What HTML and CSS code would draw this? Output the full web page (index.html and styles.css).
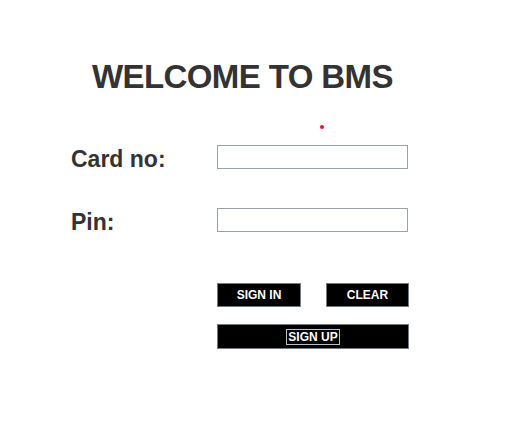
FILE: index.html
```html
<!DOCTYPE html>
<html>
<head>
<meta charset="utf-8">
<link rel="stylesheet" href="styles.css">
</head>
<body>
<div class="frame">
  <h1 class="title">WELCOME TO BMS</h1>
  <div class="dot-row"><span class="dot"></span></div>
  <div class="form">
    <div class="row">
      <label class="label">Card no:</label>
      <input class="field" type="text">
    </div>
    <div class="row row-pin">
      <label class="label">Pin:</label>
      <input class="field" type="password">
    </div>
    <div class="actions">
      <div class="btn-row">
        <button class="btn btn-signin">SIGN IN</button>
        <button class="btn btn-clear">CLEAR</button>
      </div>
      <button class="btn btn-signup"><span class="focus">SIGN UP</span></button>
    </div>
  </div>
</div>
</body>
</html>
```
FILE: styles.css
```css
* { box-sizing: border-box; }
html, body {
  margin: 0;
  padding: 0;
  background: #ffffff;
}
body {
  font-family: "Liberation Sans", Arial, sans-serif;
  color: #333333;
}
.frame {
  width: 526px;
  height: 446px;
  padding-top: 60px;
}
.title {
  margin: 0;
  padding-left: 92px;
  font-size: 33px;
  letter-spacing: -0.6px;
  line-height: 34px;
  font-weight: bold;
  color: #333333;
}
.dot-row {
  height: 4px;
  margin-top: 31px;
  padding-left: 320px;
}
.dot {
  display: block;
  width: 4px;
  height: 4px;
  border-radius: 50%;
  background: #e8141b;
}
.form {
  padding-left: 71px;
  margin-top: 16px;
}
.row {
  display: flex;
  align-items: center;
  height: 24px;
}
.row-pin {
  margin-top: 39px;
}
.label {
  width: 146px;
  font-size: 23px;
  font-weight: bold;
  color: #333333;
  line-height: 24px;
  padding-top: 3px;
}
.field {
  width: 191px;
  height: 24px;
  margin: 0;
  border: 1px solid #9aa1a8;
  background: #fff;
  padding: 0 4px;
  outline: none;
}
.actions {
  margin-top: 51px;
  margin-left: 146px;
  width: 192px;
  display: flex;
  flex-direction: column;
  gap: 17px;
}
.btn-row {
  display: flex;
  justify-content: space-between;
}
.btn {
  margin: 0;
  padding: 0;
  background: #000000;
  color: #ffffff;
  border: 1px solid #6f7a84;
  font-family: "Liberation Sans", Arial, sans-serif;
  font-weight: bold;
  font-size: 12px;
  display: flex;
  align-items: center;
  justify-content: center;
}
.btn-signin {
  width: 84px;
  height: 24px;
}
.btn-clear {
  width: 83px;
  height: 24px;
}
.btn-signup {
  width: 192px;
  height: 25px;
}
.focus {
  border: 1px solid #b8c0c8;
  padding: 1px 1px 0 1px;
  line-height: 13px;
}
```
